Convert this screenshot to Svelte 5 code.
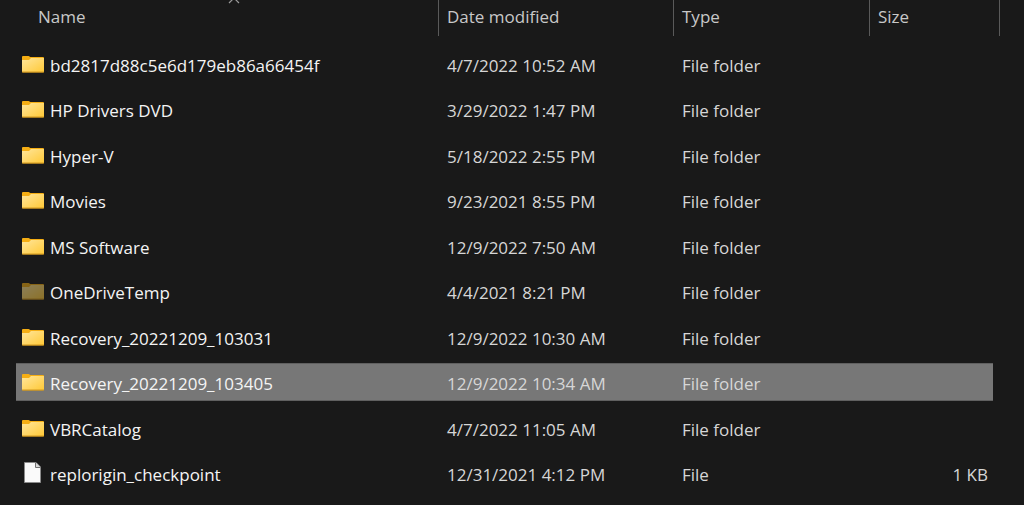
<script>
  const columns = ['Name', 'Date modified', 'Type', 'Size'];

  const entries = [
    { name: 'bd2817d88c5e6d179eb86a66454f', date: '4/7/2022 10:52 AM', type: 'File folder' },
    { name: 'HP Drivers DVD', date: '3/29/2022 1:47 PM', type: 'File folder' },
    { name: 'Hyper-V', date: '5/18/2022 2:55 PM', type: 'File folder' },
    { name: 'Movies', date: '9/23/2021 8:55 PM', type: 'File folder' },
    { name: 'MS Software', date: '12/9/2022 7:50 AM', type: 'File folder' },
    { name: 'OneDriveTemp', date: '4/4/2021 8:21 PM', type: 'File folder', hidden: true },
    { name: 'Recovery_20221209_103031', date: '12/9/2022 10:30 AM', type: 'File folder' },
    { name: 'Recovery_20221209_103405', date: '12/9/2022 10:34 AM', type: 'File folder' },
    { name: 'VBRCatalog', date: '4/7/2022 11:05 AM', type: 'File folder' },
    { name: 'replorigin_checkpoint', date: '12/31/2021 4:12 PM', type: 'File', size: '1 KB' }
  ];

  let selected = $state(7);
</script>

<svg class="defs" aria-hidden="true">
  <defs>
    <linearGradient id="folder-face" x1="0" y1="0" x2="1" y2="1">
      <stop offset="0" stop-color="#ffe69c" />
      <stop offset="1" stop-color="#ffc937" />
    </linearGradient>
  </defs>
</svg>

<main>
  <table>
    <colgroup>
      <col />
      <col class="date-col" />
      <col class="type-col" />
      <col class="size-col" />
    </colgroup>
    <thead>
      <tr>
        {#each columns as column, i}
          <th scope="col" aria-sort={i === 0 ? 'ascending' : undefined}>
            <button class="heading" type="button">{column}</button>
            {#if i === 0}
              <svg class="sort" width="12" height="4" viewBox="0 0 12 4" aria-hidden="true">
                <path d="M1 3 6 -2 11 3" fill="none" stroke="#9a9a9a" stroke-width="1.2" />
              </svg>
            {/if}
          </th>
        {/each}
      </tr>
    </thead>
    <tbody>
      {#each entries as entry, i}
        <tr class:selected={i === selected} onclick={() => (selected = i)}>
          <td>
            <div class="cell name">
              {#if entry.type === 'File'}
                <svg class="icon" width="22" height="24" viewBox="0 0 22 24" aria-hidden="true">
                  <path d="M2.5 1.5H14L18.5 6V21.5H2.5Z" fill="#fafafa" stroke="#8b8b8b" />
                  <path d="M13.5 1.5V6.5H18.5" fill="#d8d8d8" stroke="#707070" />
                </svg>
              {:else}
                <svg class="icon" class:hidden={entry.hidden} width="22" height="24" viewBox="0 0 22 24" aria-hidden="true">
                  <path d="M0 5a1 1 0 0 1 1-1H6.6L8.4 5H21a1 1 0 0 1 1 1V10H0Z" fill="#f5ae14" />
                  <path d="M0 8H7L9 6H22V20H0Z" fill="url(#folder-face)" />
                  <path d="M0 19.5H22V20a.7.7 0 0 1-.7.7H.7A.7.7 0 0 1 0 20Z" fill="#d49a20" />
                </svg>
              {/if}
              <span>{entry.name}</span>
            </div>
          </td>
          <td><div class="cell">{entry.date}</div></td>
          <td><div class="cell">{entry.type}</div></td>
          <td><div class="cell size">{entry.size ?? ''}</div></td>
        </tr>
      {/each}
    </tbody>
  </table>
</main>

<style>
  :global(body) {
    margin: 0;
    background: #191919;
  }

  .defs {
    position: absolute;
    width: 0;
    height: 0;
  }

  main {
    padding-right: 24px;
    color: #d6d6d6;
    font: 17px/24px 'Open Sans', 'Noto Sans', sans-serif;
  }

  table {
    width: 100%;
    table-layout: fixed;
    border-collapse: collapse;
  }

  .date-col {
    width: 235px;
  }

  .type-col {
    width: 196px;
  }

  .size-col {
    width: 130px;
  }

  th {
    position: relative;
    height: 43px;
    padding: 0;
    vertical-align: top;
    font-weight: 400;
  }

  .heading {
    display: block;
    width: 100%;
    height: 36px;
    padding: 0 8px 2px;
    border: 0;
    border-right: 1px solid #5a5a5a;
    background: none;
    color: #c8c8c8;
    font: inherit;
    text-align: left;
  }

  th:first-child .heading {
    padding-left: 38px;
  }

  .sort {
    position: absolute;
    top: 0;
    left: 228px;
  }

  td {
    height: 43px;
    padding: 2px 0 0;
    vertical-align: top;
  }

  tr:nth-child(even) td {
    height: 44px;
  }

  .cell {
    display: flex;
    align-items: center;
    box-sizing: border-box;
    height: 38px;
    padding: 4px 0 0 8px;
    white-space: nowrap;
  }

  .name {
    gap: 6px;
    margin-left: 16px;
    padding-left: 6px;
    color: #f4f4f4;
  }

  .size {
    justify-content: flex-end;
    margin-right: 7px;
    padding-right: 5px;
  }

  .icon {
    flex: none;
    margin-bottom: 4px;
  }

  .hidden {
    opacity: 0.5;
  }

  .selected .cell {
    background: #777;
    box-shadow: inset 0 1px #606060, inset 0 -1px #606060;
  }
</style>
